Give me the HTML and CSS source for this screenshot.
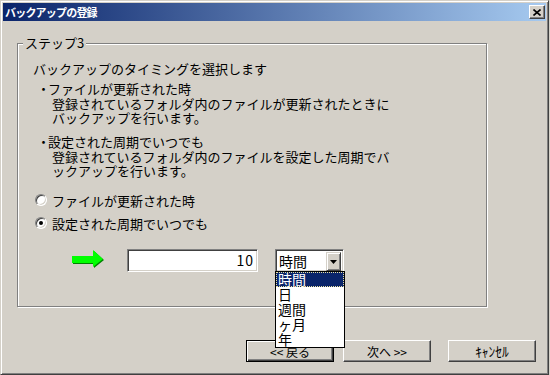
FILE: index.html
```html
<!DOCTYPE html>
<html lang="ja">
<head>
    <meta charset="UTF-8">
    <title>バックアップの登録</title>
    <link rel="stylesheet" href="styles.css">
</head>
<body>
    <div class="window">
        <div class="titlebar">
            <span class="title">バックアップの登録</span>
            <button class="close">
                <svg width="8" height="7" viewBox="0 0 8 7">
                    <path d="M0.5 0.5 L7.5 6.5 M7.5 0.5 L0.5 6.5" stroke="#000" stroke-width="1.6" fill="none"/>
                </svg>
            </button>
        </div>
        <div class="client">
            <fieldset class="group">
                <legend>ステップ3</legend>
                <div class="group-body">
                    <p class="intro">バックアップのタイミングを選択します</p>
                    <div class="note">
                        <div class="note-head"><span class="dot">・</span>ファイルが更新された時</div>
                        <div class="note-line">登録されているフォルダ内のファイルが更新されたときに</div>
                        <div class="note-line">バックアップを行います。</div>
                    </div>
                    <div class="note second">
                        <div class="note-head"><span class="dot">・</span>設定された周期でいつでも</div>
                        <div class="note-line">登録されているフォルダ内のファイルを設定した周期でバ</div>
                        <div class="note-line">ックアップを行います。</div>
                    </div>
                    <label class="radio first"><span class="radio-mark"></span>ファイルが更新された時</label>
                    <label class="radio"><span class="radio-mark checked"></span>設定された周期でいつでも</label>
                    <div class="entry">
                        <svg class="arrow" width="32" height="18" viewBox="0 0 32 18">
                            <path d="M1 7 H22 V1 L32 10 L22 18 V14 H1 Z" fill="#008000"/>
                            <path d="M0 6 H21 V0 L31 9 L21 17 V13 H0 Z" fill="#00ff00"/>
                        </svg>
                        <div class="textbox">10</div>
                        <div class="combo">
                            <span class="combo-value">時間</span>
                            <span class="combo-btn">
                                <svg width="7" height="4" viewBox="0 0 7 4"><path d="M0 0 H7 L3.5 4 Z" fill="#000"/></svg>
                            </span>
                            <ul class="combo-list">
                                <li class="selected">時間</li>
                                <li>日</li>
                                <li>週間</li>
                                <li>ヶ月</li>
                                <li>年</li>
                            </ul>
                        </div>
                    </div>
                </div>
            </fieldset>
            <div class="buttons">
                <button class="btn default">&lt;&lt; 戻る</button>
                <button class="btn next">次へ &gt;&gt;</button>
                <button class="btn cancel">ｷｬﾝｾﾙ</button>
            </div>
        </div>
    </div>
</body>
</html>
```

FILE: styles.css
```css
body {
    margin: 0;
    background-color: #d4d0c8;
    font-family: "Noto Sans CJK JP", sans-serif;
    font-size: 13px;
    color: #000;
}

.window {
    box-sizing: border-box;
    width: 549px;
    height: 375px;
    padding: 2px;
    border: 1px solid;
    border-color: #d4d0c8 #404040 #404040 #d4d0c8;
    box-shadow: inset 1px 1px 0 #fff, inset -1px -1px 0 #808080;
    display: flex;
    flex-direction: column;
}

.titlebar {
    height: 18px;
    padding: 0 1px 0 2px;
    display: flex;
    align-items: center;
    justify-content: space-between;
    background: linear-gradient(to right, #0a246a, #a6caf0);
}

.title {
    color: #fff;
    font-weight: bold;
    font-size: 11px;
    letter-spacing: -0.8px;
    line-height: 18px;
}

.close {
    box-sizing: border-box;
    width: 16px;
    height: 14px;
    padding: 0;
    display: flex;
    align-items: center;
    justify-content: center;
    background-color: #d4d0c8;
    border: 1px solid;
    border-color: #fff #404040 #404040 #fff;
    box-shadow: inset -1px -1px 0 #808080;
}

.client {
    flex: 1;
    display: flex;
    flex-direction: column;
}

.group {
    box-sizing: border-box;
    width: 470px;
    margin: 15px 0 0 14px;
    padding: 0;
    min-width: 0;
    border: 1px solid #808080;
    box-shadow: inset 1px 1px 0 #fff, 1px 1px 0 #fff;
}

.group legend {
    margin-left: 5px;
    padding: 0 2px;
    line-height: 14px;
    background-color: #d4d0c8;
}

.group-body {
    padding: 0 14px 34px 15px;
}

.intro {
    margin: 12px 0 0;
    line-height: 14px;
}

.note {
    margin-top: 6px;
    line-height: 14.5px;
}

.note.second {
    margin-top: 9.5px;
}

.note-head {
    padding-left: 4px;
}

.dot {
    display: inline-block;
    width: 11px;
    overflow: visible;
}

.note-line {
    padding-left: 19px;
}

.radio {
    height: 16px;
    margin-top: 7px;
    padding-left: 2px;
    display: flex;
    align-items: center;
    gap: 5px;
}

.radio.first {
    margin-top: 13.5px;
}

.radio-mark {
    box-sizing: border-box;
    width: 12px;
    height: 12px;
    border-radius: 50%;
    background-color: #fff;
    border: 1px solid;
    border-color: #808080 #fff #fff #808080;
    box-shadow: inset 1px 1px 0 #404040, inset -1px -1px 0 #d4d0c8;
    display: flex;
    align-items: center;
    justify-content: center;
}

.radio-mark.checked::after {
    content: "";
    width: 4px;
    height: 4px;
    border-radius: 50%;
    background-color: #000;
}

.entry {
    margin-top: 18px;
    padding-left: 39px;
    display: flex;
    align-items: flex-start;
}

.arrow {
    margin-top: 1px;
}

.textbox {
    box-sizing: border-box;
    width: 131px;
    height: 23px;
    margin-left: 23px;
    padding-right: 3px;
    background-color: #fff;
    border: 1px solid;
    border-color: #808080 #fff #fff #808080;
    box-shadow: inset 1px 1px 0 #404040, inset -1px -1px 0 #d4d0c8;
    text-align: right;
    font-size: 14px;
    letter-spacing: 1px;
    line-height: 21px;
}

.combo {
    position: relative;
    box-sizing: border-box;
    width: 69px;
    height: 23px;
    margin-left: 17px;
    padding: 2px;
    display: flex;
    background-color: #fff;
    border: 1px solid;
    border-color: #808080 #fff #fff #808080;
    box-shadow: inset 1px 1px 0 #404040, inset -1px -1px 0 #d4d0c8;
}

.combo-value {
    flex: 1;
    padding-left: 1px;
    font-size: 14px;
    line-height: 19px;
}

.combo-btn {
    box-sizing: border-box;
    width: 15px;
    height: 19px;
    display: flex;
    align-items: center;
    justify-content: center;
    background-color: #d4d0c8;
    border: 1px solid;
    border-color: #d4d0c8 #404040 #404040 #d4d0c8;
    box-shadow: inset 1px 1px 0 #fff, inset -1px -1px 0 #808080;
}

.combo-list {
    position: absolute;
    top: 100%;
    left: -1px;
    z-index: 2;
    box-sizing: border-box;
    width: 70px;
    margin: 0;
    padding: 0;
    list-style: none;
    background-color: #fff;
    border: 1px solid #000;
}

.combo-list li {
    height: 15px;
    padding-left: 2px;
    font-size: 14px;
    line-height: 15px;
}

.combo-list li.selected {
    color: #fff;
    background-color: #0a246a;
    outline: 1px dotted #e8e0a0;
    outline-offset: -1px;
}

.buttons {
    margin-top: 33px;
    padding-left: 243px;
    display: flex;
}

.btn {
    box-sizing: border-box;
    width: 88px;
    height: 22px;
    padding: 0;
    font-family: inherit;
    font-size: 12px;
    color: #000;
    background-color: #d4d0c8;
    border: 1px solid;
    border-color: #fff #404040 #404040 #fff;
    box-shadow: inset -1px -1px 0 #808080;
}

.btn.default {
    border-color: #000;
    box-shadow: inset 1px 1px 0 #fff, inset -1px -1px 0 #404040, inset -2px -2px 0 #808080;
}

.btn.next {
    margin-left: 9px;
}

.btn.cancel {
    margin-left: 17px;
    font-size: 13.5px;
}
```
